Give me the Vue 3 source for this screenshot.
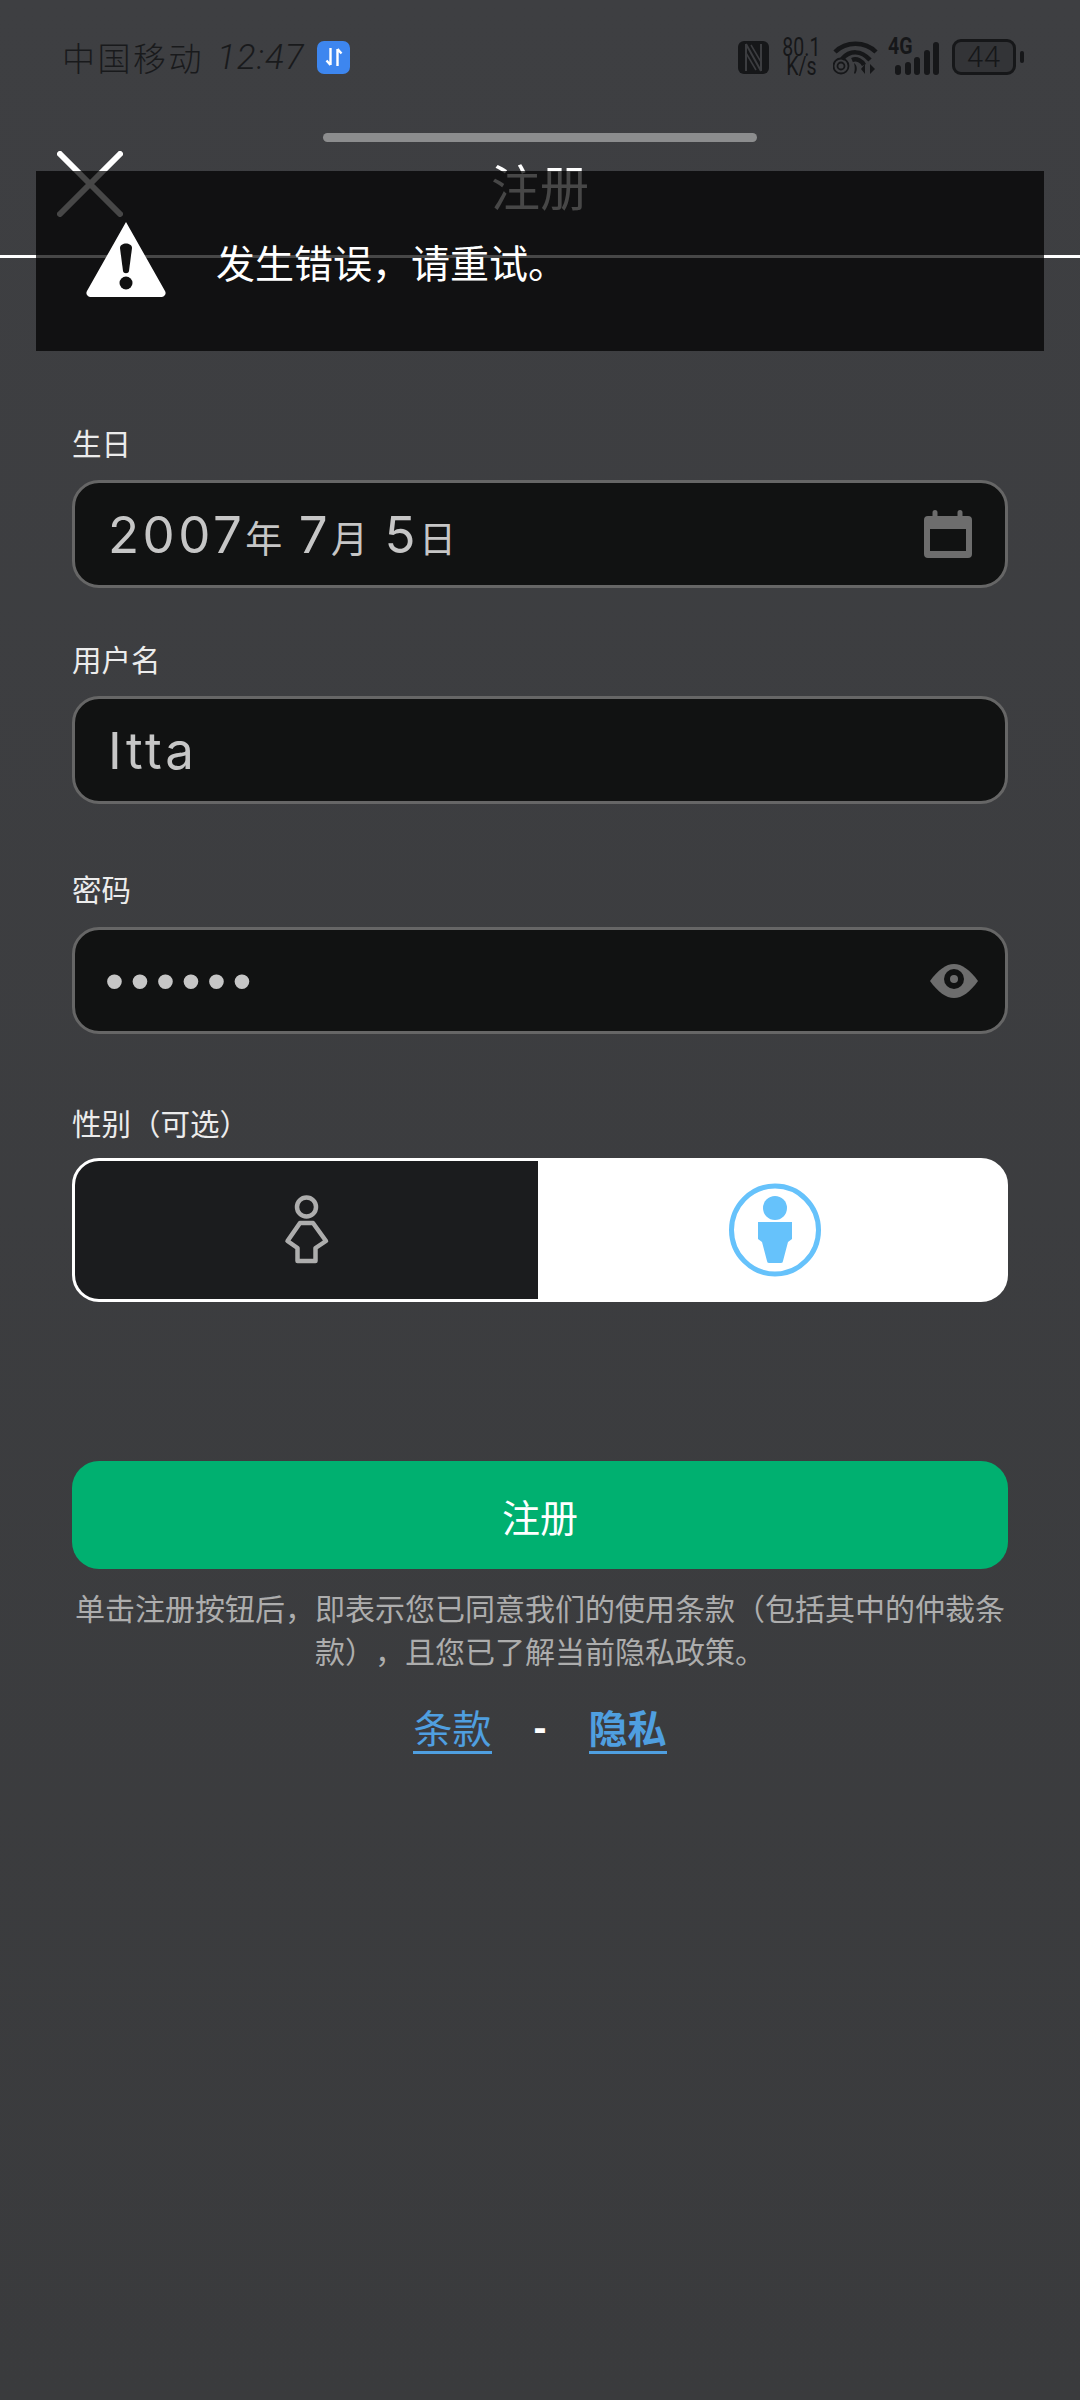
<script setup>
const dots = '••••••'
</script>

<template>
  <div class="page">
    <div class="status">
      <div class="status-left">
        <span class="carrier">中国移动</span>
        <span class="time">12:47</span>
        <span class="data-badge">
          <svg width="18" height="20" viewBox="0 0 18 20" fill="none" stroke="#fff" stroke-width="2.4">
            <path d="M5.500 1v17M1.500 13.500l4 4.500M12.500 19V2M12.500 2l4 4.500" />
          </svg>
        </span>
      </div>
      <div class="status-right">
        <svg class="nfc" width="31" height="33" viewBox="0 0 31 33">
          <rect width="31" height="33" rx="6" fill="#161719" />
          <path d="M8 3v27M23 3v27M8 3l15 27" stroke="#3c3d40" stroke-width="2" fill="none" />
          <path d="M13 4l10 17M8 12l10 17" stroke="#3c3d40" stroke-width="1.500" fill="none" />
        </svg>
        <div class="speed"><span>80.1</span><span class="unit">K/s</span></div>
        <svg class="wifi" width="45" height="36" viewBox="0 0 45 36" fill="none" stroke="#161719">
          <path d="M2 13C13 2 32 2 43 13" stroke-width="4.500" />
          <path d="M9 20C17 11 28 11 37 21" stroke-width="4.500" />
          <path d="M19 21C24 19 29 22 31 26" stroke-width="4.500" />
          <circle cx="8" cy="27" r="7.500" stroke-width="1.800" />
          <circle cx="8" cy="27" r="3.500" stroke-width="1.800" />
          <path d="M21 24c3 2 4 7 1 11l-1-1c1-3 1-6 0-10zM32 25l-4 5 4 5zM37 25l-0 10 5-5z" fill="#161719" stroke="none" />
        </svg>
        <div class="signal">
          <span class="net">4G</span>
          <i class="bar b1"></i><i class="bar b2"></i><i class="bar b3"></i><i class="bar b4"></i><i class="bar b5"></i>
        </div>
        <div class="battery"><span class="level">44</span></div>
        <i class="battery-tip"></i>
      </div>
    </div>

    <div class="handle"></div>

    <header class="header">
      <svg class="close" width="66" height="66" viewBox="0 0 66 66" fill="none" stroke="#fff" stroke-width="6" stroke-linecap="round">
        <path d="M3 3l60 60M63 3L3 63" />
      </svg>
      <h1 class="title">注册</h1>
    </header>

    <main class="form">
      <label class="label">生日</label>
      <div class="input">
        <span class="date"><b>2007</b>年 <b>7</b>月 <b>5</b>日</span>
        <svg class="cal" width="48" height="48" viewBox="0 0 48 48" fill="#6d6d6d">
          <path fill-rule="evenodd" d="M4 6h4.500V2.500a2.500 2.500 0 0 1 5 0V6h20V2.500a2.500 2.500 0 0 1 5 0V6H44a4 4 0 0 1 4 4v34a4 4 0 0 1-4 4H4a4 4 0 0 1-4-4V10a4 4 0 0 1 4-4zM6 19v22h36V19z" />
        </svg>
      </div>

      <label class="label gap-user">用户名</label>
      <div class="input"><span class="value">Itta</span></div>

      <label class="label gap-pass">密码</label>
      <div class="input input-pass">
        <span class="dots">{{ dots }}</span>
        <svg class="eye" width="48" height="34" viewBox="0 0 48 34">
          <path fill="#6d6d6d" d="M0 17C8 6 16 0 24 0s16 6 24 17c-8 11-16 17-24 17S8 28 0 17z" />
          <circle cx="24" cy="15" r="10" fill="#111212" />
          <circle cx="24" cy="15" r="4" fill="#6d6d6d" />
        </svg>
      </div>

      <label class="label gap-gender">性别（可选）</label>
      <div class="toggle">
        <div class="opt opt-female">
          <svg width="46" height="70" viewBox="0 0 46 70" fill="none" stroke="#adadad" stroke-width="4.500" stroke-linejoin="round">
            <circle cx="22.500" cy="12" r="9.500" />
            <path d="M16 28h13l13 18-10.500 7v13h-18V53L3.500 46z" />
          </svg>
        </div>
        <div class="opt opt-male">
          <svg width="94" height="94" viewBox="0 0 94 94">
            <ellipse cx="47" cy="47" rx="43.500" ry="44" fill="none" stroke="#66c2fb" stroke-width="5" />
            <circle cx="47" cy="25" r="12" fill="#66c2fb" />
            <path fill="#66c2fb" d="M30 39h34v17l-4 3-5 19a2 2 0 0 1-2 2H41a2 2 0 0 1-2-2l-5-19-4-3z" />
          </svg>
        </div>
      </div>

      <button class="submit" type="button">注册</button>
      <p class="terms">单击注册按钮后，即表示您已同意我们的使用条款（包括其中的仲裁条款），且您已了解当前隐私政策。</p>
      <div class="links">
        <a class="link">条款</a>
        <span class="dash">-</span>
        <a class="link link-bold">隐私</a>
      </div>
    </main>

    <!-- overlays -->
    <div class="scan-line"></div>
    <div class="toast">
      <svg width="80" height="75" viewBox="0 0 80 75">
        <path fill="#fff" d="M40 0L79 69a4 4 0 0 1-3 6H4a4 4 0 0 1-3-6z" />
        <path fill="#111" d="M34 26c0-6 12-6 12 0l-3 23c-.4 3-5.600 3-6 0z" />
        <circle cx="40" cy="61" r="6.500" fill="#111" />
      </svg>
      <span class="toast-text">发生错误，请重试。</span>
    </div>
  </div>
</template>

<style>
html,
body {
  margin: 0;
  background: #3c3d40;
}
</style>

<style scoped>
.page {
  position: relative;
  width: 1080px;
  height: 2400px;
  overflow: hidden;
  background: linear-gradient(#3e3f42, #3a3b3d);
  font-family: 'Noto Sans CJK SC', 'Noto Sans', sans-serif;
  color: #fff;
  text-spacing-trim: space-all;
}

.status {
  display: flex;
  justify-content: space-between;
  align-items: flex-start;
  height: 133px;
  padding: 40px 56px 0 62px;
  box-sizing: border-box;
}
.status-left,
.status-right {
  display: flex;
  align-items: center;
  height: 34px;
}
.carrier {
  width: 140px;
  font-size: 33px;
  font-weight: 300;
  color: #191a1c;
  letter-spacing: 2.500px;
  white-space: nowrap;
}
.time {
  width: 86px;
  margin-left: 15px;
  font-family: 'Roboto', sans-serif;
  font-style: italic;
  font-weight: 300;
  font-size: 35px;
  letter-spacing: 1px;
  color: #191a1c;
  white-space: nowrap;
}
.data-badge {
  display: flex;
  align-items: center;
  justify-content: center;
  width: 33px;
  height: 33px;
  margin-left: 14px;
  border-radius: 7px;
  background: #3d86ef;
}
.status-right {
  color: #161719;
}
.speed {
  display: flex;
  flex-direction: column;
  align-items: center;
  width: 38px;
  margin-left: 13px;
  font-family: 'Roboto', sans-serif;
  font-size: 25px;
  line-height: 19px;
  white-space: nowrap;
}
.speed span {
  transform: scaleX(0.78);
}
.wifi {
  margin-left: 13px;
}
.signal {
  position: relative;
  display: flex;
  align-items: flex-end;
  justify-content: flex-end;
  gap: 3.500px;
  width: 51px;
  height: 36px;
  margin-left: 10px;
}
.net {
  position: absolute;
  left: 0;
  top: -3px;
  font-family: 'Roboto', sans-serif;
  font-size: 23px;
  font-weight: 700;
  line-height: 22px;
  transform: scaleX(0.85);
  transform-origin: left center;
}
.bar {
  width: 6px;
  border-radius: 3px;
  background: #161719;
}
.b1 { height: 10px; }
.b2 { height: 13px; }
.b3 { height: 18px; }
.b4 { height: 25px; }
.b5 { height: 33px; }
.battery {
  display: flex;
  align-items: center;
  justify-content: center;
  box-sizing: border-box;
  width: 64px;
  height: 36px;
  margin-left: 13px;
  border: 3px solid #161719;
  border-radius: 9px;
  background: #333437;
}
.level {
  font-family: 'Roboto', sans-serif;
  font-size: 29px;
  font-weight: 300;
  letter-spacing: 1px;
}
.battery-tip {
  width: 4px;
  height: 12px;
  margin-left: 4px;
  border-radius: 2px;
  background: #161719;
}

.handle {
  width: 434px;
  height: 9px;
  margin: 0 auto;
  border-radius: 5px;
  background: #8c8d8e;
}

.header {
  display: grid;
  grid-template-columns: 66px 1fr 66px;
  align-items: center;
  height: 66px;
  margin-top: 8px;
  padding: 0 57px;
}
.title {
  margin: 2px 0 0;
  text-align: center;
  font-size: 49px;
  font-weight: 400;
  line-height: 66px;
  color: #fff;
}

.form {
  display: flex;
  flex-direction: column;
  padding: 208px 72px 0;
}
.label {
  font-size: 29.500px;
  line-height: 36px;
  color: #ececec;
}
.gap-user { margin-top: 52px; }
.gap-pass { margin-top: 66px; }
.gap-gender { margin-top: 70px; }

.input {
  display: flex;
  align-items: center;
  justify-content: space-between;
  box-sizing: border-box;
  height: 108px;
  margin-top: 20px;
  padding: 0 33px;
  background: #111212;
  border: 3px solid #666;
  border-radius: 27px;
  color: #c6c6c6;
  font-family: 'Inter', 'Noto Sans CJK SC', sans-serif;
}
.date {
  font-size: 37px;
  word-spacing: 6px;
}
.date b {
  font-size: 51px;
  font-weight: 400;
  letter-spacing: 3.500px;
}
.value {
  font-size: 51px;
  letter-spacing: 3.500px;
}
.input-pass {
  height: 107px;
  margin-top: 21px;
  padding-right: 27px;
}
.dots {
  font-family: 'Liberation Sans', sans-serif;
  font-size: 54px;
  line-height: 60px;
  letter-spacing: 6.600px;
  margin-left: -3px;
}

.toggle {
  display: flex;
  box-sizing: border-box;
  height: 144px;
  margin-top: 18px;
  border: 3px solid #fff;
  border-radius: 27px;
  overflow: hidden;
  background: #fff;
}
.opt {
  display: flex;
  align-items: center;
  justify-content: center;
}
.opt-female {
  width: 463px;
  background: #1b1c1e;
}
.opt-male {
  flex: 1;
  padding-left: 7px;
}

.submit {
  height: 108px;
  margin-top: 159px;
  padding: 0;
  border: 0;
  border-radius: 27px;
  background: #00b070;
  color: #fff;
  font-family: inherit;
  font-size: 38px;
}
.terms {
  margin: 17px 0 0;
  text-align: center;
  font-size: 30px;
  line-height: 43px;
  color: #adadad;
}
.links {
  display: flex;
  justify-content: center;
  align-items: center;
  gap: 42px;
  margin-top: 29px;
  font-size: 39px;
  line-height: 50px;
}
.link {
  color: #4f9fe0;
  border-bottom: 3px solid #4f9fe0;
}
.link-bold {
  font-weight: 700;
}
.dash {
  font-weight: 700;
  font-family: 'Liberation Sans', sans-serif;
  color: #fff;
}

.scan-line {
  position: absolute;
  left: 0;
  right: 0;
  top: 255px;
  height: 3px;
  background: #fff;
}
.toast {
  position: absolute;
  left: 36px;
  top: 171px;
  box-sizing: border-box;
  display: flex;
  align-items: flex-start;
  width: 1008px;
  height: 180px;
  padding: 51px 0 0 50px;
  background: rgba(0, 0, 0, 0.72);
}
.toast-text {
  margin: 11px 0 0 50px;
  font-size: 39px;
  line-height: 56px;
  color: #fff;
}
</style>
